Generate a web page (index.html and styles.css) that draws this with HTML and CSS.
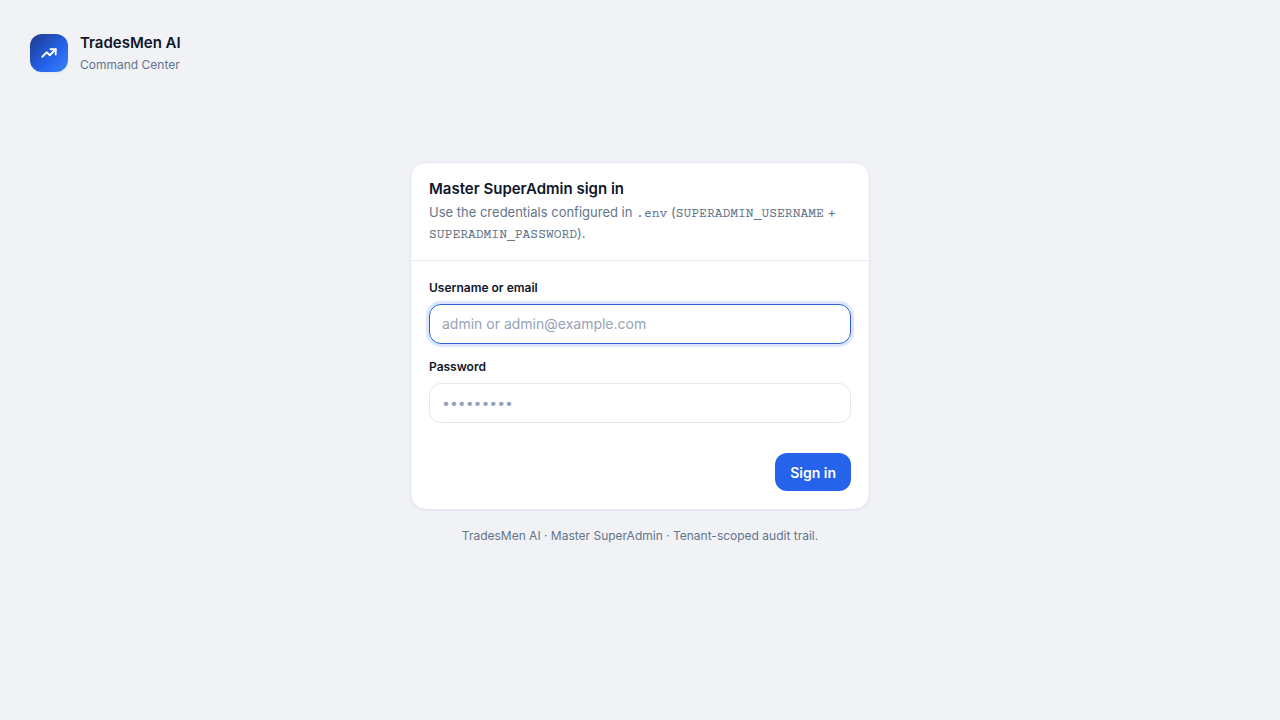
FILE: index.html
```html
<!DOCTYPE html>
<html lang="en">
<head>
<meta charset="utf-8">
<meta name="viewport" content="width=device-width, initial-scale=1">
<title>Sign in · TradesMen AI</title>
<link rel="stylesheet" href="styles.css">
</head>
<body>
<header class="brand">
  <span class="brand-mark">
    <svg class="brand-icon" viewBox="0 0 24 24" aria-hidden="true"><path d="M3 17l6-6 4 4 8-8"/><path d="M14 7h7v7"/></svg>
  </span>
  <div class="brand-text">
    <div class="brand-name">TradesMen AI</div>
    <div class="brand-sub">Command Center</div>
  </div>
</header>
<main class="main">
  <section class="card">
    <div class="card-head">
      <h1 class="card-title">Master SuperAdmin sign in</h1>
      <p class="card-desc">Use the credentials configured in <code class="code">.env</code> (<code class="code">SUPERADMIN_USERNAME</code> + <code class="code">SUPERADMIN_PASSWORD</code>).</p>
    </div>
    <form class="card-body">
      <div class="field">
        <label class="label" for="username">Username or email</label>
        <input class="input" id="username" type="text" placeholder="admin or admin@example.com" autofocus>
      </div>
      <div class="field">
        <label class="label" for="password">Password</label>
        <input class="input" id="password" type="password" placeholder="•••••••••">
      </div>
      <div class="actions"><button class="button" type="submit">Sign in</button></div>
    </form>
  </section>
  <p class="note">TradesMen AI · Master SuperAdmin · Tenant-scoped audit trail.</p>
</main>
</body>
</html>
```

FILE: styles.css
```css
* { box-sizing: border-box; }
body {
  margin: 0;
  min-height: 100vh;
  display: flex;
  flex-direction: column;
  background: #f0f2f6;
  color: #0f172a;
  font: 14px/21px Inter, sans-serif;
}
.brand { display: flex; align-items: center; gap: 12px; padding: 31px 30px 0; }
.brand-mark {
  display: flex;
  align-items: center;
  justify-content: center;
  width: 38px;
  height: 38px;
  border-radius: 12px;
  background: linear-gradient(135deg, #1e3a8a, #2563eb 60%, #3b82f6);
  box-shadow: 0 1px 2px rgba(15, 23, 42, 0.06);
}
.brand-icon {
  width: 18px;
  height: 18px;
  fill: none;
  stroke: #fff;
  stroke-width: 2.4;
  stroke-linecap: round;
  stroke-linejoin: round;
}
.brand-name { font-size: 15px; line-height: 24px; font-weight: 600; }
.brand-sub { font-size: 12px; line-height: 20px; color: #64748b; }
.main { width: 100%; max-width: 460px; margin: 87px auto 0; }
.card {
  background: #fff;
  border: 1px solid #e2e8f0;
  border-radius: 16px;
  box-shadow: 0 1px 2px rgba(15, 23, 42, 0.05);
}
.card-head { padding: 14px 18px 16px; border-bottom: 1px solid #e9edf3; }
.card-title { margin: 0 0 1px; font-size: 15px; line-height: 24px; font-weight: 600; }
.card-desc { margin: 0; font-size: 13px; line-height: 21px; color: #64748b; }
.code {
  font-family: "Courier 10 Pitch", "Courier Prime", FreeMono, "Nimbus Mono PS", Courier, "Liberation Mono", monospace;
  font-size: 13px;
  line-height: 1;
}
.card-body { padding: 18px; }
.field { margin-bottom: 14px; }
.label { display: block; margin-bottom: 8px; font-size: 12px; line-height: 17px; font-weight: 600; }
.input {
  display: block;
  width: 100%;
  height: 40px;
  padding: 0 12px 2px;
  border: 1px solid #e2e8f0;
  border-radius: 12px;
  background: #fff;
  color: #0f172a;
  font: 14px Inter, sans-serif;
  outline: none;
}
.input::placeholder { color: #94a3b8; }
.input:focus { border-color: #2c62cf; box-shadow: 0 0 0 3px rgba(37, 99, 235, 0.16); }
.actions { display: flex; justify-content: flex-end; padding-top: 16px; }
.button {
  height: 38px;
  padding: 0 15px;
  border: 0;
  border-radius: 12px;
  background: #2563eb;
  color: #fff;
  font: 600 14px Inter, sans-serif;
}
.note { margin: 16px 0 0; text-align: center; font-size: 12px; line-height: 20px; color: #64748b; }
```
